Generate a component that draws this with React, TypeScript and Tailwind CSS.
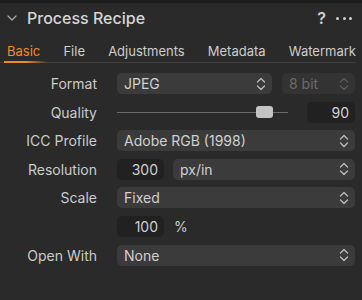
import React from "react";

const font = { fontFamily: "Inter, 'Noto Sans', sans-serif" };

function Updown({ dim = false }: { dim?: boolean }) {
  return (
    <svg width="10" height="14" viewBox="0 0 10 14" fill="none" className={dim ? "text-[#5c5c5c]" : "text-[#bdbdbd]"}>
      <path d="M1.5 5L5 1.5L8.5 5" stroke="currentColor" strokeWidth="1.3" strokeLinecap="round" strokeLinejoin="round" />
      <path d="M1.5 9L5 12.5L8.5 9" stroke="currentColor" strokeWidth="1.3" strokeLinecap="round" strokeLinejoin="round" />
    </svg>
  );
}

function Select({ value, className = "", dim = false }: { value: string; className?: string; dim?: boolean }) {
  return (
    <div
      className={`flex h-[21px] items-center justify-between rounded-[5px] pl-[7px] pr-[6px] text-[14px] ${
        dim ? "bg-[#333333] text-[#6a6a6a]" : "bg-[#3b3b3b] text-[#d0d0d0]"
      } ${className}`}
    >
      <span>{value}</span>
      <Updown dim={dim} />
    </div>
  );
}

function NumBox({ value, className = "" }: { value: string; className?: string }) {
  return (
    <div className={`flex h-[21px] items-center justify-end rounded-[5px] bg-[#212121] pr-[6px] text-[14px] text-[#d0d0d0] ${className}`}>
      {value}
    </div>
  );
}

function Row({ label, children }: { label: string; children: React.ReactNode }) {
  return (
    <div className="flex h-[21px] items-center">
      <div className="w-[97px] text-right text-[14px] text-[#cbcbcb]">{label}</div>
      <div className="ml-[20px] flex flex-1 items-center">{children}</div>
    </div>
  );
}

export default function App() {
  const tabs = ["Basic", "File", "Adjustments", "Metadata", "Watermark"];
  return (
    <div className="h-[300px] w-[362px] overflow-hidden bg-[#2a2a2a]" style={font}>
      <div className="h-[3px] bg-[#1c1c1c]" />
      <div className="flex h-[30px] items-center pl-[7px] pr-[10px]">
        <svg width="10" height="6" viewBox="0 0 10 6" fill="none" className="text-[#a8a8a8]">
          <path d="M1 1L5 5L9 1" stroke="currentColor" strokeWidth="1.3" strokeLinecap="round" strokeLinejoin="round" />
        </svg>
        <span className="ml-[10px] text-[16px] font-medium text-[#d6d6d6]">Process Recipe</span>
        <span className="ml-auto text-[16px] font-semibold text-[#cfcfcf]">?</span>
        <span className="ml-[10px] flex gap-[3.5px]">
          <span className="h-[3px] w-[3px] rounded-full bg-[#cfcfcf]" />
          <span className="h-[3px] w-[3px] rounded-full bg-[#cfcfcf]" />
          <span className="h-[3px] w-[3px] rounded-full bg-[#cfcfcf]" />
        </span>
      </div>
      <div className="relative ml-[0px] mr-[6px] mt-[9px] flex h-[21px] items-start justify-between border-b border-[#3e3e3e] pl-[7px] text-[13px] text-[#cdcdcd]">
        {tabs.map((t, i) => (
          <span key={t} className={i === 0 ? "text-[#f08a1f]" : ""}>
            {t}
          </span>
        ))}
        <div className="absolute bottom-[-1px] left-[4px] h-[2px] w-[44px] bg-gradient-to-r from-[#f08a1f] via-[#f08a1f] to-transparent" />
      </div>
      <div className="mt-[10px] flex flex-col gap-[7.6px] pr-[7px]">
        <Row label="Format">
          <Select value="JPEG" className="w-[155px]" />
          <Select value="8 bit" dim className="ml-[10px] flex-1" />
        </Row>
        <Row label="Quality">
          <div className="relative h-[21px] w-[171px]">
            <div className="absolute left-0 right-0 top-[10px] h-[1.5px] bg-[#6a6a6a]" />
            <div className="absolute left-[139px] top-[4.5px] h-[12px] w-[17px] rounded-[3px] bg-[#c4c4c4]" />
          </div>
          <NumBox value="90" className="ml-[19px] flex-1" />
        </Row>
        <Row label="ICC Profile">
          <Select value="Adobe RGB (1998)" className="flex-1" />
        </Row>
        <Row label="Resolution">
          <NumBox value="300" className="w-[47px]" />
          <Select value="px/in" className="ml-[9px] flex-1" />
        </Row>
        <Row label="Scale">
          <Select value="Fixed" className="flex-1" />
        </Row>
        <Row label="">
          <NumBox value="100" className="w-[47px]" />
          <span className="ml-[10px] text-[14px] text-[#cdcdcd]">%</span>
        </Row>
        <Row label="Open With">
          <Select value="None" className="flex-1" />
        </Row>
      </div>
    </div>
  );
}
